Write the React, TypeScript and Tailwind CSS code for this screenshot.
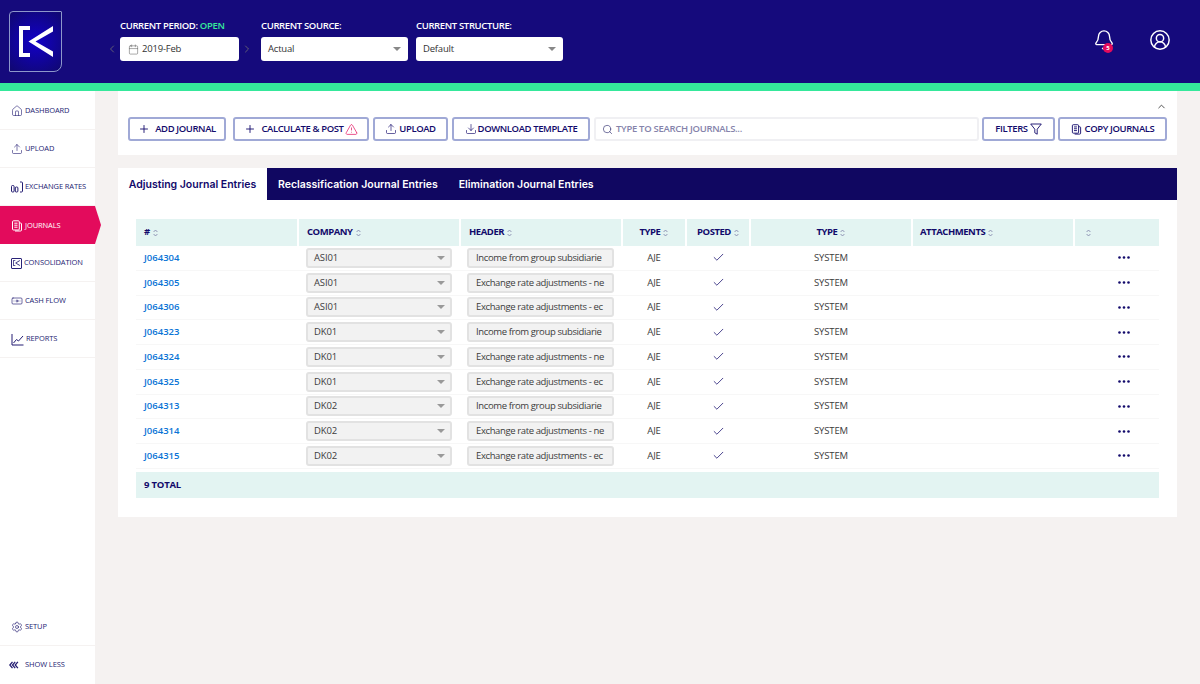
import React from 'react';
import {
  Home, Upload, Banknote, Settings, ChevronLeft, ChevronRight,
  ChevronUp, Calendar, Bell, CircleUserRound, Plus, TriangleAlert, Download, Search, Check,
} from 'lucide-react';

const NAVY = 'text-[#120a6b]';

const LogoMark = ({ width = 34, height = 31, color = 'white' }: { width?: number; height?: number; color?: string }) => (
  <svg width={width} height={height} viewBox="0 0 34 31" fill={color}>
    <path d="M0 0h11v4H4v23h7v4H0z" />
    <path d="M34 0v5.500L16.500 15.500 34 25.500V31L9.500 15.500z" />
  </svg>
);

const ConsolidationIcon = () => (
  <span className="flex h-[11px] w-[11px] items-center justify-center rounded-[1px] border border-[#2a2378]">
    <LogoMark width={7} height={6} color="#2a2378" />
  </span>
);

const RatesIcon = () => (
  <svg width="12" height="12" viewBox="0 0 12 12" fill="none" stroke="currentColor" strokeWidth="1">
    <rect x="0.500" y="4.500" width="2.600" height="6.500" rx="1" />
    <rect x="4.300" y="6" width="2.600" height="5" rx="1" />
    <path d="M9 1h1.500a1 1 0 0 1 1 1v8a1 1 0 0 1-1 1H9" />
  </svg>
);

const ReportsIcon = () => (
  <svg width="13" height="13" viewBox="0 0 13 13" fill="none" stroke="currentColor" strokeWidth="1">
    <path d="M1 1v11h11.500" />
    <path d="M2.500 10 5.500 6.500l2 1.500L12 3" />
  </svg>
);

const StackIcon = ({ size = 12 }: { size?: number }) => (
  <svg width={size} height={size} viewBox="0 0 12 12" fill="none" stroke="currentColor" strokeWidth="1">
    <path d="M2.500.8h4.800a1 1 0 0 1 1 1V9a1 1 0 0 1-1 1H2.500a1 1 0 0 1-1-1V1.800a1 1 0 0 1 1-1z" />
    <path d="M3.300 3.200h3.200M3.300 5.200h3.200M3.300 7.200h3.200" />
    <path d="M8.300 3h1.200a1 1 0 0 1 1 1v6a1 1 0 0 1-1 1H4" />
  </svg>
);

const FunnelIcon = () => (
  <svg width="12" height="12" viewBox="0 0 12 12" fill="none" stroke="currentColor" strokeWidth="0.9" strokeLinejoin="round">
    <path d="M.7 1h10.600L7.200 6.200v5L4.800 9.800V6.200z" />
  </svg>
);

const ShowLessIcon = () => (
  <svg width="10" height="8" viewBox="0 0 10 8" fill="none" stroke="currentColor" strokeWidth="1.300">
    <path d="M3.500.8.800 4l2.700 3.200M6.200.8 3.500 4l2.700 3.200M8.900.8 6.200 4l2.700 3.200" />
  </svg>
);

const navItems = [
  { label: 'DASHBOARD', icon: <Home size={12} strokeWidth={1.2} /> },
  { label: 'UPLOAD', icon: <Upload size={12} strokeWidth={1.2} /> },
  { label: 'EXCHANGE RATES', icon: <RatesIcon /> },
  { label: 'JOURNALS', icon: <StackIcon />, active: true },
  { label: 'CONSOLIDATION', icon: <ConsolidationIcon /> },
  { label: 'CASH FLOW', icon: <Banknote size={12} strokeWidth={1.3} /> },
  { label: 'REPORTS', icon: <ReportsIcon /> },
];

const rows = [
  ['J064304', 'ASI01', 'Income from group subsidiarie'],
  ['J064305', 'ASI01', 'Exchange rate adjustments - ne'],
  ['J064306', 'ASI01', 'Exchange rate adjustments - ec'],
  ['J064323', 'DK01', 'Income from group subsidiarie'],
  ['J064324', 'DK01', 'Exchange rate adjustments - ne'],
  ['J064325', 'DK01', 'Exchange rate adjustments - ec'],
  ['J064313', 'DK02', 'Income from group subsidiarie'],
  ['J064314', 'DK02', 'Exchange rate adjustments - ne'],
  ['J064315', 'DK02', 'Exchange rate adjustments - ec'],
];

const columns = [
  { label: '#', className: 'pl-2' },
  { label: 'COMPANY', className: 'pl-2' },
  { label: 'HEADER', className: 'pl-2' },
  { label: 'TYPE', className: 'justify-center' },
  { label: 'POSTED', className: 'justify-center' },
  { label: 'TYPE', className: 'justify-center' },
  { label: 'ATTACHMENTS', className: 'pl-[7px]' },
  { label: '', className: 'pl-2' },
];

const gridCols = 'grid grid-cols-[161px_160px_160px_62px_62px_160px_160px_84px] gap-x-[2px]';

const SortIcon = () => (
  <svg width="5" height="8" viewBox="0 0 5 8" fill="none" stroke="#7d80a8" strokeWidth="0.8" className="ml-[3px]">
    <path d="M.6 3 2.500 1l1.900 2M.6 5l1.900 2 1.900-2" />
  </svg>
);

const Caret = ({ className = '' }: { className?: string }) => (
  <span className={`h-0 w-0 border-x-[4px] border-t-[4px] border-x-transparent ${className}`} />
);

const ToolButton = ({ children, className = '' }: { children: React.ReactNode; className?: string }) => (
  <button className={`flex h-[24px] shrink-0 items-center justify-center rounded-[3px] border-2 border-[#a0a9d6] bg-white text-[9.5px] font-semibold tracking-[-0.4px] ${NAVY} ${className}`}>
    {children}
  </button>
);

const Sidebar = () => (
  <aside className="flex w-[95px] shrink-0 flex-col bg-white pt-[1px] text-[7.5px] tracking-[-0.1px]">
    <nav className="flex-1">
      {navItems.map((item) =>
        item.active ? (
          <div key={item.label} className="relative flex h-[38px] items-center gap-[2px] bg-[#e30b5c] pl-[11px] pt-[1px] text-white">
            {item.icon}
            <span>{item.label}</span>
            <span className="absolute left-full top-0 h-0 w-0 border-y-[19px] border-l-[6px] border-y-transparent border-l-[#e30b5c]" />
          </div>
        ) : (
          <div key={item.label} className="flex h-[38px] items-center gap-[2px] border-b border-[#f5f2f1] pl-[11px] pt-[1px] text-[#241d72]">
            {item.icon}
            <span>{item.label}</span>
          </div>
        ),
      )}
    </nav>
    <div className="flex h-[38px] items-center gap-[2px] border-b border-[#f5f2f1] pl-[11px] text-[#241d72]">
      <Settings size={12} strokeWidth={1.3} />
      <span>SETUP</span>
    </div>
    <div className="flex h-[38px] items-center gap-[6px] pl-[9px] text-[#241d72]">
      <ShowLessIcon />
      <span>SHOW LESS</span>
    </div>
  </aside>
);

const Header = () => (
  <header className="flex h-[83px] shrink-0 items-start bg-[#150a7c] text-white">
    <div className="ml-[9px] mt-[11px] flex h-[61px] w-[53px] items-center justify-center rounded-br-[8px] rounded-tl-[4px] rounded-tr-[1px] rounded-bl-[1px] border border-[#8d97cb] bg-[radial-gradient(circle,#1200c8,#10086f)]">
      <LogoMark />
    </div>
    <div className="ml-[46px] mt-[19px] w-[146px]">
      <div className="ml-[12px] text-[9.5px] font-semibold leading-[14px] tracking-[-0.35px]">
        CURRENT PERIOD: <span className="text-[#35e89b]">OPEN</span>
      </div>
      <div className="mt-[4px] flex items-center">
        <ChevronLeft size={12} strokeWidth={1.3} className="-ml-[2px] mr-[2px] text-[#8a8a70]" />
        <div className="flex h-[24px] w-[119px] items-center rounded-[3px] bg-white pl-[8px] text-[9.5px] tracking-[-0.2px] text-[#333]">
          <Calendar size={11} strokeWidth={1.1} className="mr-[3px] text-[#555]" />
          2019-Feb
        </div>
        <ChevronRight size={12} strokeWidth={1.3} className="ml-[2px] text-[#8a8a70]" />
      </div>
    </div>
    <div className="ml-[7px] mt-[19px] w-[147px]">
      <div className="text-[9.5px] font-semibold leading-[14px] tracking-[-0.35px]">CURRENT SOURCE:</div>
      <div className="mt-[4px] flex h-[24px] items-center justify-between rounded-[3px] bg-white px-[7px] text-[9.5px] tracking-[-0.2px] text-[#333]">
        Actual
        <Caret className="border-t-[#888]" />
      </div>
    </div>
    <div className="ml-[8px] mt-[19px] w-[147px]">
      <div className="text-[9.5px] font-semibold leading-[14px] tracking-[-0.35px]">CURRENT STRUCTURE:</div>
      <div className="mt-[4px] flex h-[24px] items-center justify-between rounded-[3px] bg-white px-[7px] text-[9.5px] tracking-[-0.2px] text-[#333]">
        Default
        <Caret className="border-t-[#888]" />
      </div>
    </div>
    <div className="ml-auto mr-[29px] mt-[29px] flex items-center gap-[34px]">
      <div className="relative">
        <Bell size={22} strokeWidth={1.5} />
        <span className="absolute left-[10px] top-[14px] flex h-[10px] w-[10px] items-center justify-center rounded-full bg-[#e30b5c] text-[6px] font-bold">5</span>
      </div>
      <CircleUserRound size={22} strokeWidth={1.6} />
    </div>
  </header>
);

const Toolbar = () => (
  <section className="relative flex h-[64px] items-start bg-white pl-[10px] pr-[10px] pt-[26px]">
    <ChevronUp size={11} className="absolute right-[10px] top-[10px] text-[#444]" />
    <ToolButton className="w-[98px] gap-[5px]">
      <Plus size={12} strokeWidth={1.8} />ADD JOURNAL
    </ToolButton>
    <ToolButton className="ml-[7px] w-[136px] gap-[5px]">
      <Plus size={12} strokeWidth={1.8} />
      <span className="flex items-center gap-[1px]">CALCULATE &amp; POST <TriangleAlert size={13} strokeWidth={1.3} className="text-[#e30b5c]" /></span>
    </ToolButton>
    <ToolButton className="ml-[4px] w-[75px] gap-[2px]">
      <Upload size={12} strokeWidth={1.3} />UPLOAD
    </ToolButton>
    <ToolButton className="ml-[4px] w-[138px] gap-[1px]">
      <Download size={12} strokeWidth={1.3} />DOWNLOAD TEMPLATE
    </ToolButton>
    <div className="ml-[4px] flex h-[24px] min-w-0 flex-1 items-center gap-[3px] rounded-[3px] border-2 border-[#f0f0f3] pl-[6px] text-[9.5px] font-semibold tracking-[-0.3px] text-[#8583ab]">
      <Search size={11} strokeWidth={1.5} className="text-[#3c3a78]" />
      TYPE TO SEARCH JOURNALS...
    </div>
    <ToolButton className="ml-[3px] w-[73px] gap-[2px]">
      FILTERS <FunnelIcon />
    </ToolButton>
    <ToolButton className="ml-[3px] w-[109px] gap-[3px]">
      <StackIcon size={11} />COPY JOURNALS
    </ToolButton>
  </section>
);

const JournalTable = () => (
  <section className="bg-white px-[18px] pb-[19px] pt-[19px]">
    <div className={`${gridCols} h-[27px]`}>
      {columns.map((col, i) => (
        <div key={i} className={`flex items-center bg-[#e3f4f2] text-[9.5px] font-bold tracking-[-0.45px] ${NAVY} ${col.className}`}>
          {col.label}
          <SortIcon />
        </div>
      ))}
    </div>
    {rows.map(([id, company, header]) => (
      <div key={id} className={`${gridCols} h-[24.75px] items-center border-b border-[#f7f7f7] text-[9.5px] tracking-[-0.15px] text-[#3c3c3c]`}>
        <a className="pl-2 font-semibold tracking-[0px] text-[#0a74d6]">{id}</a>
        <div className="ml-[7px] flex h-[20px] w-[146px] items-center justify-between rounded-[3px] border-2 border-[#e2e2e2] bg-[#f2f2f2] pl-[6px] pr-[5px]">
          {company}
          <Caret className="border-t-[#999]" />
        </div>
        <div className="ml-[6px] flex h-[20px] w-[147px] items-center rounded-[3px] border-2 border-[#e2e2e2] bg-[#f2f2f2] pl-[7px] tracking-[-0.38px]">
          {header}
        </div>
        <div className="text-center">AJE</div>
        <div className="flex justify-center">
          <Check size={13} strokeWidth={1.4} className={NAVY} />
        </div>
        <div className="text-center">SYSTEM</div>
        <div />
        <div className="flex justify-center pl-[14px]">
          <svg width="12" height="3" viewBox="0 0 12 3" fill="#120a6b">
            <circle cx="1.500" cy="1.500" r="1.300" />
            <circle cx="6" cy="1.500" r="1.300" />
            <circle cx="10.500" cy="1.500" r="1.300" />
          </svg>
        </div>
      </div>
    ))}
    <div className={`mt-[3px] flex h-[26px] items-center bg-[#e3f4f2] pl-2 text-[9.5px] font-bold tracking-[-0.2px] ${NAVY}`}>9 TOTAL</div>
  </section>
);

const Tabs = () => (
  <div className="mt-[13px] flex h-[32px] bg-[#100761] pt-[1px] font-['Inter',sans-serif] text-[10.5px] font-semibold text-white">
    <div className={`-mt-[1px] flex w-[149px] items-center justify-center bg-white pt-[1px] ${NAVY}`}>Adjusting Journal Entries</div>
    <div className="ml-[11px] flex items-center">Reclassification Journal Entries</div>
    <div className="ml-[21px] flex items-center">Elimination Journal Entries</div>
  </div>
);

export default function App() {
  return (
    <div className="flex h-[684px] w-[1200px] flex-col overflow-hidden bg-[#f5f2f1] font-['Open_Sans',sans-serif]">
      <Header />
      <div className="h-[8px] shrink-0 bg-[#35e89b]" />
      <div className="flex min-h-0 flex-1">
        <Sidebar />
        <main className="ml-[23px] w-[1059px]">
          <Toolbar />
          <Tabs />
          <JournalTable />
        </main>
      </div>
    </div>
  );
}
